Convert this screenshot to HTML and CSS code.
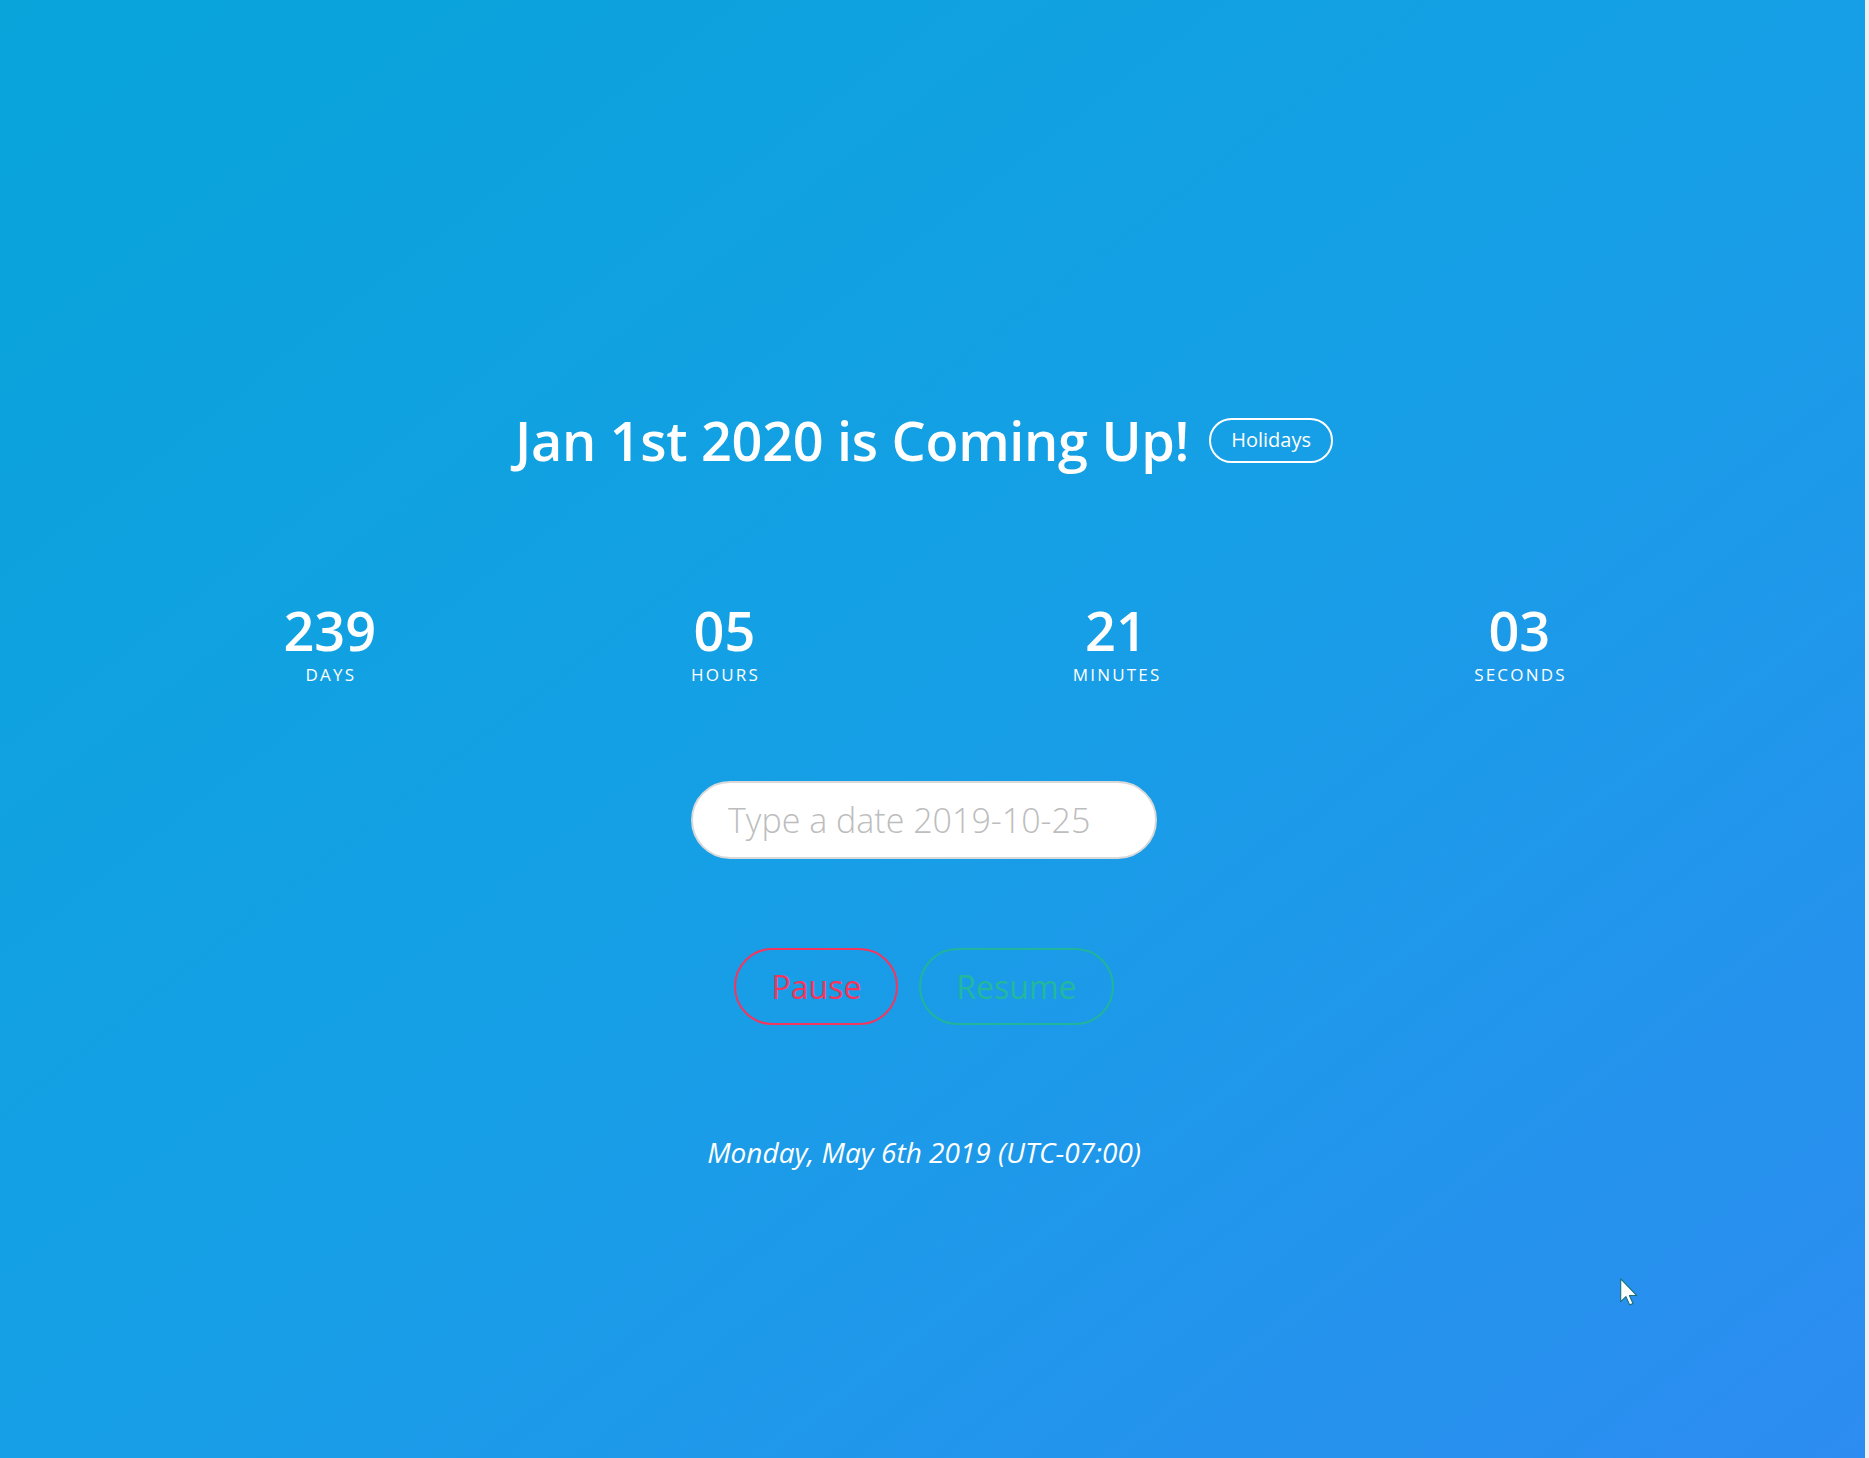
FILE: index.html
```html
<!DOCTYPE html>
<html lang="en">
<head>
<meta charset="utf-8">
<title>Countdown</title>
<link rel="stylesheet" href="styles.css">
</head>
<body>
<main class="page">
  <header class="title-row">
    <h1 class="title">Jan 1st 2020 is Coming Up!</h1>
    <button class="tag-btn" type="button">Holidays</button>
  </header>

  <section class="countdown">
    <div class="unit"><span class="num">239</span><span class="label">Days</span></div>
    <div class="unit"><span class="num">05</span><span class="label">Hours</span></div>
    <div class="unit"><span class="num">21</span><span class="label">Minutes</span></div>
    <div class="unit"><span class="num">03</span><span class="label">Seconds</span></div>
  </section>

  <input class="date-input" type="text" placeholder="Type a date 2019-10-25">

  <div class="controls">
    <button class="pill pill-pause" type="button">Pause</button>
    <button class="pill pill-resume" type="button">Resume</button>
  </div>

  <p class="today">Monday, May 6th 2019 (UTC-07:00)</p>

  <svg class="cursor" width="18" height="28" viewBox="0 0 13 20" aria-hidden="true">
    <path d="M0.5 0.5 L0.5 17 L4.3 13.4 L7 19.3 L9.4 18.3 L6.8 12.5 L12 12.5 Z" fill="#ffffff" stroke="#16707e" stroke-width="0.8" stroke-linejoin="round"/>
  </svg>
</main>
</body>
</html>
```

FILE: styles.css
```css
* {
  box-sizing: border-box;
}

html, body {
  margin: 0;
  padding: 0;
}

body {
  background: #f0f0f0;
  font-family: "Open Sans", "Noto Sans", "DejaVu Sans", sans-serif;
  color: #ffffff;
  overflow: hidden;
}

.page {
  position: relative;
  width: calc(100% - 4px);
  height: 100vh;
  background: linear-gradient(to bottom right, #08a4da 0%, #169fe6 50%, #2d8cf1 100%);
  padding: 405px 17px 0 0;
  display: flex;
  flex-direction: column;
  align-items: center;
}

.title-row {
  display: flex;
  align-items: center;
  gap: 20px;
  height: 70px;
}

.title {
  margin: 0;
  font-size: 54px;
  line-height: 70px;
  font-weight: 600;
  letter-spacing: -0.3px;
}

.tag-btn {
  height: 45px;
  padding: 0 20px;
  border: 2px solid #ffffff;
  border-radius: 23px;
  background: transparent;
  color: #ffffff;
  font-family: inherit;
  font-size: 20px;
  line-height: 1;
}

.countdown {
  margin-top: 127px;
  width: 1596px;
  display: flex;
  justify-content: space-around;
}

.unit {
  display: flex;
  flex-direction: column;
  align-items: center;
}

.num {
  font-size: 54px;
  line-height: 56px;
  font-weight: 600;
}

.label {
  margin-top: 6px;
  font-size: 17px;
  line-height: 22px;
  letter-spacing: 2.2px;
  margin-right: -2.2px;
  text-transform: uppercase;
}

.date-input {
  margin-top: 95px;
  width: 466px;
  height: 78px;
  padding: 0 26px 0 35px;
  border: 2px solid #d9d9d9;
  border-radius: 39px;
  background: #ffffff;
  font-family: inherit;
  font-size: 34px;
  font-weight: 300;
  color: #555555;
  outline: none;
}

.date-input::placeholder {
  color: #bdbdbd;
}

.controls {
  margin-top: 89px;
  display: flex;
  gap: 21px;
}

.pill {
  height: 77px;
  padding: 0 35px;
  border-radius: 39px;
  background: transparent;
  font-family: inherit;
  font-size: 32px;
  line-height: 1;
}

.pill-pause {
  border: 2px solid #f5365c;
  color: #f5365c;
}

.pill-resume {
  border: 2px solid #21b59c;
  color: #22b89e;
}

.today {
  margin: 110px 0 0;
  font-size: 28px;
  line-height: 34px;
  font-style: italic;
}

.cursor {
  position: absolute;
  left: 1620px;
  top: 1278px;
}
```
